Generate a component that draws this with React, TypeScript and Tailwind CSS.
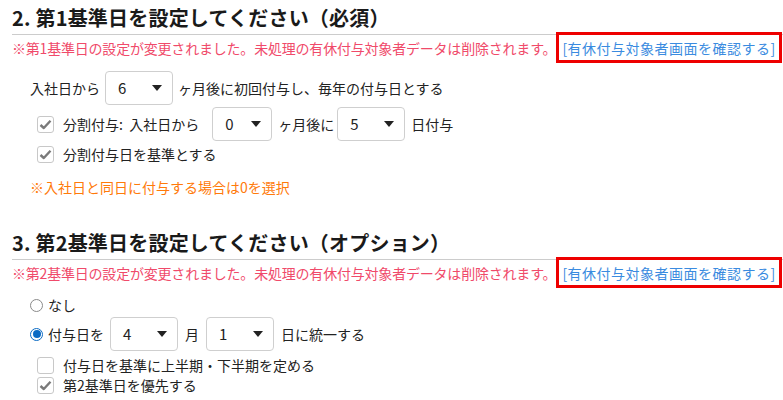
import React from 'react';

function Caret() {
  return (
    <svg width="10" height="6" viewBox="0 0 10 6" className="shrink-0">
      <path d="M0 0 L10 0 L5 6 Z" fill="#222" />
    </svg>
  );
}

function Select({ value, width }: { value: string; width: string }) {
  return (
    <div
      className={`${width} h-[34px] shrink-0 flex items-center justify-between pl-[12px] pr-[10px] border border-[#cfcfcf] rounded-[4px] bg-white text-[15px] text-[#222]`}
    >
      <span>{value}</span>
      <Caret />
    </div>
  );
}

function Checkbox({ checked }: { checked: boolean }) {
  return (
    <span className="w-[17px] h-[17px] shrink-0 flex items-center justify-center border border-[#c8c8c8] rounded-[3px] bg-white">
      {checked && (
        <svg width="13" height="11" viewBox="0 0 13 11">
          <path d="M1.5 6 L4.8 9 L11.5 1.8" fill="none" stroke="#7a7a7a" strokeWidth="2.4" strokeLinejoin="round" />
        </svg>
      )}
    </span>
  );
}

function Radio({ checked }: { checked: boolean }) {
  return checked ? (
    <span className="w-[13px] h-[13px] shrink-0 rounded-full border border-[#0b6bc4] flex items-center justify-center bg-white">
      <span className="w-[8px] h-[8px] rounded-full bg-[#0b6bc4]" />
    </span>
  ) : (
    <span className="w-[13px] h-[13px] shrink-0 rounded-full border border-[#8a8a8a] bg-white" />
  );
}

function SectionHeading({ title, warning }: { title: string; warning: string }) {
  return (
    <>
      <div className="pt-[4px] pb-[2px] border-b border-[#cccccc]">
        <h2 className="text-[20px] leading-[28px] font-bold text-[#1a1a1a] tracking-[0.2px]">{title}</h2>
      </div>
      <div className="-mt-[3px] h-[31px] flex items-center text-[14px] leading-[20px]">
        <span className="text-[#f04a6a] tracking-[-0.2px]">{warning}</span>
        <span className="h-[31px] flex items-center px-[3px] border-[3px] border-[#ee0000] text-[#3a8be0] tracking-[0.5px]">
          [有休付与対象者画面を確認する]
        </span>
      </div>
    </>
  );
}

export default function App() {
  return (
    <div
      className="w-[783px] h-[400px] overflow-hidden bg-white pl-[12px] text-[14px] text-[#222]"
      style={{ fontFamily: '"Noto Sans CJK JP", "Noto Sans", sans-serif' }}
    >
      <SectionHeading
        title="2. 第1基準日を設定してください（必須）"
        warning="※第1基準日の設定が変更されました。未処理の有休付与対象者データは削除されます。"
      />

      <div className="pl-[18px]">
        <div className="mt-[8px] flex items-center h-[34px]">
          <span className="mr-[5px]">入社日から</span>
          <Select value="6" width="w-[68px]" />
          <span className="ml-[5px]">ヶ月後に初回付与し、毎年の付与日とする</span>
        </div>

        <div className="mt-[2px] pl-[7px] flex items-center h-[34px]">
          <Checkbox checked />
          <span className="ml-[9px] mr-[13px]">分割付与:&nbsp;&nbsp;入社日から</span>
          <Select value="0" width="w-[60px]" />
          <span className="ml-[6px] mr-[3px]">ヶ月後に</span>
          <Select value="5" width="w-[68px]" />
          <span className="ml-[6px]">日付与</span>
        </div>

        <div className="mt-[3px] pl-[7px] flex items-center h-[20px]">
          <Checkbox checked />
          <span className="ml-[9px]">分割付与日を基準とする</span>
        </div>

        <p className="mt-[13px] leading-[20px] text-[#ff7a0a]">※入社日と同日に付与する場合は0を選択</p>
      </div>

      <div className="mt-[28px]">
        <SectionHeading
          title="3. 第2基準日を設定してください（オプション）"
          warning="※第2基準日の設定が変更されました。未処理の有休付与対象者データは削除されます。"
        />
      </div>

      <div className="pl-[18px]">
        <div className="mt-[7px] flex items-center h-[20px]">
          <Radio checked={false} />
          <span className="ml-[5px]">なし</span>
        </div>

        <div className="mt-[2px] flex items-center h-[34px]">
          <Radio checked />
          <span className="ml-[5px] mr-[6px]">付与日を</span>
          <Select value="4" width="w-[68px]" />
          <span className="ml-[7px] mr-[7px]">月</span>
          <Select value="1" width="w-[68px]" />
          <span className="ml-[7px]">日に統一する</span>
        </div>

        <div className="mt-[4px] pl-[7px] flex items-center h-[20px]">
          <Checkbox checked={false} />
          <span className="ml-[9px]">付与日を基準に上半期・下半期を定める</span>
        </div>

        <div className="pl-[7px] flex items-center h-[20px]">
          <Checkbox checked />
          <span className="ml-[9px]">第2基準日を優先する</span>
        </div>
      </div>
    </div>
  );
}
